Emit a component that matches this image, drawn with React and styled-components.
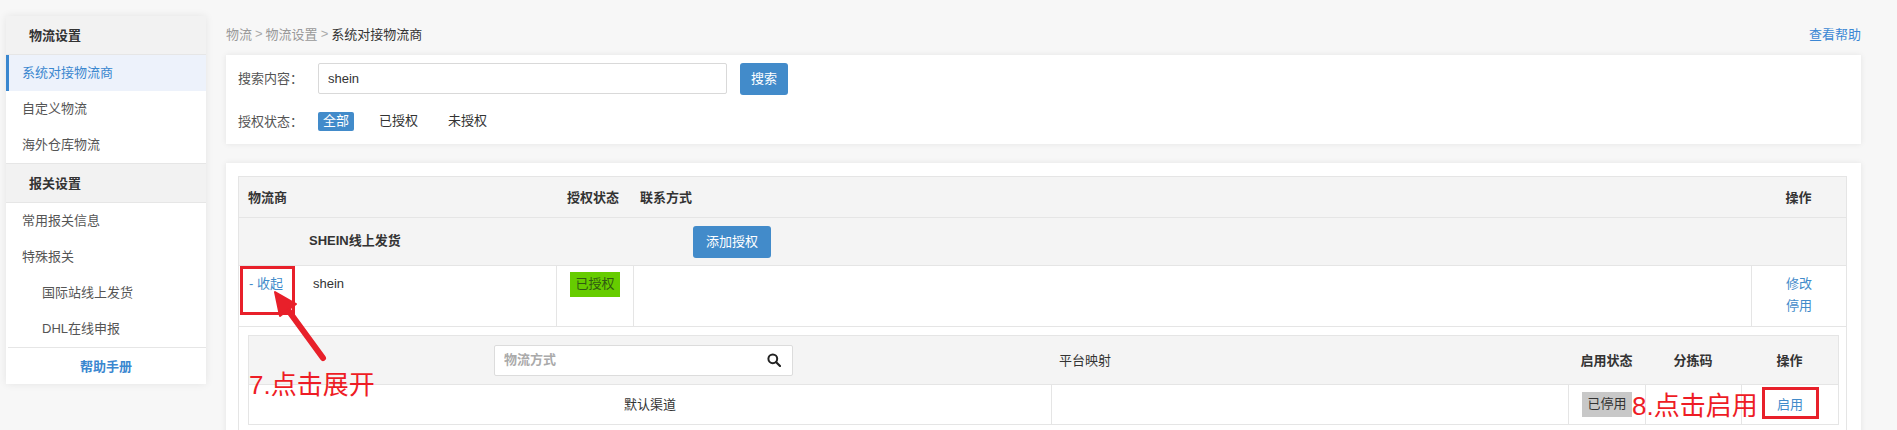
import React from 'react';
import styled, { createGlobalStyle } from 'styled-components';

const GlobalStyle = createGlobalStyle`
  html, body { margin: 0; padding: 0; overflow: hidden; background: #f7f7f7; }
  body {
    font-family: "Liberation Sans", "Noto Sans CJK SC", sans-serif;
    font-size: 13px;
    color: #333;
  }
  * { box-sizing: border-box; }
`;

const Page = styled.div`
  display: flex;
  align-items: flex-start;
  gap: 20px;
  width: 1897px;
  padding: 16px 36px 0 6px;
`;

/* ---------- Sidebar ---------- */
const Sidebar = styled.nav`
  flex: none;
  width: 200px;
  background: #fff;
  box-shadow: 0 0 8px rgba(0, 0, 0, 0.08);
`;

const SideHeader = styled.div`
  height: ${p => (p.$first ? 39 : 40)}px;
  display: flex;
  align-items: center;
  padding-left: 23px;
  padding-bottom: 1px;
  background: #f2f2f2;
  font-weight: bold;
  color: #333;
  border-bottom: 1px solid #e6e6e6;
  border-top: ${p => (p.$first ? 'none' : '1px solid #e6e6e6')};
`;

const SideItem = styled.div`
  height: 36px;
  display: flex;
  align-items: center;
  padding-bottom: 3px;
  padding-left: ${p => (p.$active ? 13 : p.$sub ? 36 : 16)}px;
  color: ${p => (p.$active ? '#3a87cf' : '#555')};
  background: ${p => (p.$active ? '#edf2fb' : '#fff')};
  border-left: ${p => (p.$active ? '3px solid #3a87cf' : 'none')};
`;

const SideDivider = styled.div`
  margin-left: 2px;
  border-top: 1px solid #e6e6e6;
`;

const SideHelp = styled.div`
  height: 36px;
  display: flex;
  align-items: center;
  justify-content: center;
  padding-bottom: 2px;
  color: #3a87d0;
  font-weight: bold;
`;

/* ---------- Main ---------- */
const Main = styled.main`
  flex: 1;
  min-width: 0;
`;

const TopBar = styled.div`
  height: 36px;
  margin-bottom: 3px;
  padding-bottom: 2px;
  display: flex;
  align-items: center;
  justify-content: space-between;
`;

const Crumbs = styled.div`
  color: #999;
  display: flex;
  align-items: center;
`;

const CrumbSep = styled.span`
  color: #aaa;
  margin: 0 3px;
`;

const CrumbCurrent = styled.span`
  color: #333;
`;

const HelpLink = styled.a`
  color: #3b87d4;
  text-decoration: none;
`;

const Card = styled.section`
  background: #fff;
  box-shadow: 0 0 6px rgba(0, 0, 0, 0.08);
`;

const SearchCard = styled(Card)`
  padding: 8px 12px 13px 12px;
`;

const FormRow = styled.div`
  display: flex;
  align-items: center;
  height: ${p => p.$h}px;
  margin-top: ${p => p.$mt || 0}px;
`;

const FormLabel = styled.span`
  width: 80px;
  color: #555;
  margin-bottom: 2px;
`;

const TextInput = styled.input`
  width: 409px;
  height: 31px;
  border: 1px solid #d9d9d9;
  border-radius: 2px;
  padding: 0 9px;
  font: inherit;
  color: #333;
  outline: none;
`;

const PrimaryButton = styled.button`
  height: 32px;
  padding: 0 ${p => p.$px || 10}px 2px;
  margin-left: ${p => p.$ml || 0}px;
  border: none;
  border-radius: 3px;
  background: #428bca;
  color: #fff;
  font: inherit;
`;

const FilterTag = styled.span`
  height: 19px;
  line-height: 18px;
  padding: 0 5px;
  margin-right: 20px;
  border-radius: 2px;
  background: ${p => (p.$active ? '#428bca' : 'transparent')};
  color: ${p => (p.$active ? '#fff' : '#333')};
`;

const ListCard = styled(Card)`
  margin-top: 19px;
  padding: 13px 14px 10px 12px;
`;

const TableWrap = styled.div`
  position: relative;
`;

const Table = styled.div`
  border: 1px solid #e5e5e5;
  border-bottom: none;
`;

const MainGrid = styled.div`
  display: grid;
  grid-template-columns: 317px 77px 1fr 95px;
  border-bottom: 1px solid #e5e5e5;
  height: ${p => p.$h}px;
  background: ${p => p.$bg || '#fff'};
  align-items: ${p => p.$align || 'stretch'};
`;

const HeadCell = styled.div`
  font-weight: bold;
  color: #333;
  padding-left: ${p => p.$pad || 0}px;
  padding-bottom: 2px;
  text-align: ${p => (p.$center ? 'center' : 'left')};
`;

const GroupName = styled.div`
  font-weight: bold;
  color: #333;
  padding-left: 70px;
  padding-bottom: 5px;
`;

const GroupAction = styled.div`
  padding-left: 60px;
`;

const Cell = styled.div`
  border-left: ${p => (p.$divider ? '1px solid #e5e5e5' : 'none')};
  padding-top: ${p => p.$pt ?? 7}px;
  padding-left: ${p => p.$pl || 0}px;
  line-height: 22px;
  display: flex;
  flex-direction: ${p => (p.$column ? 'column' : 'row')};
  align-items: ${p => (p.$center && p.$column ? 'center' : 'flex-start')};
  justify-content: ${p => (p.$center && !p.$column ? 'center' : 'flex-start')};
`;

const TextLink = styled.a`
  color: #428bca;
  text-decoration: none;
  width: ${p => (p.$w ? `${p.$w}px` : 'auto')};
`;

const StatusTag = styled.span`
  height: 25px;
  line-height: 24px;
  padding: 0 5px;
  background: ${p => p.$bg};
  color: ${p => p.$fg};
`;

const SubArea = styled.div`
  padding: 8px 7px 10px 9px;
  border-bottom: 1px solid #e5e5e5;
`;

const SubTable = styled.div`
  border: 1px solid #e5e5e5;
  border-bottom: none;
`;

const SubGrid = styled.div`
  display: grid;
  grid-template-columns: 802px 517px 77px 96px 1fr;
  height: ${p => p.$h}px;
  background: ${p => p.$bg || '#fff'};
  border-bottom: 1px solid #e5e5e5;
  align-items: stretch;
`;

const SubHead = styled.div`
  display: flex;
  align-items: center;
  justify-content: ${p => (p.$center ? 'center' : 'flex-start')};
  padding-left: ${p => p.$pl || 0}px;
  padding-bottom: ${p => (p.$box ? 0 : 2)}px;
  font-weight: ${p => (p.$bold ? 'bold' : 'normal')};
  color: #333;
`;

const SubCell = styled.div`
  display: flex;
  align-items: center;
  justify-content: center;
  padding-bottom: ${p => (p.$text ? 3 : 0)}px;
  border-left: ${p => (p.$divider ? '1px solid #e5e5e5' : 'none')};
  color: #333;
`;

const SearchBox = styled.div`
  width: 299px;
  height: 31px;
  display: flex;
  align-items: center;
  background: #fff;
  border: 1px solid #dcdcdc;
  border-radius: 2px;
  padding: 0 11px 0 9px;
`;

const BareInput = styled.input`
  flex: 1;
  min-width: 0;
  border: none;
  outline: none;
  font: inherit;
  color: #333;
  padding: 0 0 2px;
  &::placeholder {
    color: #aaa;
    font-weight: bold;
  }
`;

/* ---------- Annotations (overlays) ---------- */
const NoteBox = styled.div`
  position: absolute;
  left: ${p => p.$x}px;
  top: ${p => p.$y}px;
  width: ${p => p.$w}px;
  height: ${p => p.$h}px;
  border: 3px solid #e8202a;
  pointer-events: none;
`;

const NoteText = styled.div`
  position: absolute;
  left: ${p => p.$x}px;
  top: ${p => p.$y}px;
  font-size: 26px;
  line-height: 30px;
  color: #ee1c25;
  white-space: nowrap;
  pointer-events: none;
`;

const NoteArrow = styled.svg`
  position: absolute;
  left: 0;
  top: 0;
  overflow: visible;
  pointer-events: none;
`;

const SearchIcon = () => (
  <svg width="14" height="14" viewBox="0 0 14 14" fill="none">
    <circle cx="5.8" cy="5.8" r="4.4" stroke="#222" strokeWidth="2" />
    <line x1="9.2" y1="9.2" x2="13" y2="13" stroke="#222" strokeWidth="2.2" strokeLinecap="round" />
  </svg>
);

export default function App() {
  return (
    <>
      <GlobalStyle />
      <Page>
        <Sidebar>
          <SideHeader $first>物流设置</SideHeader>
          <SideItem $active>系统对接物流商</SideItem>
          <SideItem>自定义物流</SideItem>
          <SideItem>海外仓库物流</SideItem>
          <SideHeader>报关设置</SideHeader>
          <SideItem>常用报关信息</SideItem>
          <SideItem>特殊报关</SideItem>
          <SideItem $sub>国际站线上发货</SideItem>
          <SideItem $sub>DHL在线申报</SideItem>
          <SideDivider />
          <SideHelp>帮助手册</SideHelp>
        </Sidebar>

        <Main>
          <TopBar>
            <Crumbs>
              物流<CrumbSep>&gt;</CrumbSep>物流设置<CrumbSep>&gt;</CrumbSep>
              <CrumbCurrent>系统对接物流商</CrumbCurrent>
            </Crumbs>
            <HelpLink>查看帮助</HelpLink>
          </TopBar>

          <SearchCard>
            <FormRow $h={31}>
              <FormLabel>搜索内容：</FormLabel>
              <TextInput defaultValue="shein" />
              <PrimaryButton $ml={13} $px={11}>搜索</PrimaryButton>
            </FormRow>
            <FormRow $h={20} $mt={17}>
              <FormLabel>授权状态：</FormLabel>
              <FilterTag $active>全部</FilterTag>
              <FilterTag>已授权</FilterTag>
              <FilterTag>未授权</FilterTag>
            </FormRow>
          </SearchCard>

          <ListCard>
            <TableWrap>
              <Table>
                <MainGrid $h={41} $bg="#f4f4f4" $align="center">
                  <HeadCell $pad={9}>物流商</HeadCell>
                  <HeadCell $pad={11}>授权状态</HeadCell>
                  <HeadCell $pad={7}>联系方式</HeadCell>
                  <HeadCell $center>操作</HeadCell>
                </MainGrid>

                <MainGrid $h={48} $bg="#f4f4f4" $align="center">
                  <GroupName>SHEIN线上发货</GroupName>
                  <div />
                  <GroupAction>
                    <PrimaryButton $px={13}>添加授权</PrimaryButton>
                  </GroupAction>
                  <div />
                </MainGrid>

                <MainGrid $h={61}>
                  <Cell $pl={10}>
                    <TextLink $w={64}>- 收起</TextLink>
                    <span>shein</span>
                  </Cell>
                  <Cell $divider $center $pt={6}>
                    <StatusTag $bg="#66cc00" $fg="#2f5a12">已授权</StatusTag>
                  </Cell>
                  <Cell $divider />
                  <Cell $divider $center $column>
                    <TextLink>修改</TextLink>
                    <TextLink>停用</TextLink>
                  </Cell>
                </MainGrid>

                <SubArea>
                  <SubTable>
                    <SubGrid $h={49} $bg="#f4f4f4">
                      <SubHead $pl={245} $box>
                        <SearchBox>
                          <BareInput placeholder="物流方式" />
                          <SearchIcon />
                        </SearchBox>
                      </SubHead>
                      <SubHead $pl={8}>平台映射</SubHead>
                      <SubHead $center $bold>启用状态</SubHead>
                      <SubHead $center $bold>分拣码</SubHead>
                      <SubHead $center $bold>操作</SubHead>
                    </SubGrid>
                    <SubGrid $h={40}>
                      <SubCell $text>默认渠道</SubCell>
                      <SubCell $divider />
                      <SubCell $divider>
                        <StatusTag $bg="#c8c8c8" $fg="#333">已停用</StatusTag>
                      </SubCell>
                      <SubCell $divider />
                      <SubCell $divider $text>
                        <TextLink>启用</TextLink>
                      </SubCell>
                    </SubGrid>
                  </SubTable>
                </SubArea>
              </Table>

              <NoteBox $x={2} $y={90} $w={55} $h={49} />
              <NoteArrow width="120" height="200" viewBox="0 0 120 200">
                <line x1="85" y1="182" x2="50" y2="134" stroke="#e8202a" strokeWidth="6" strokeLinecap="round" />
                <polygon points="37,116 58,128 42,140" fill="#e8202a" stroke="#e8202a" strokeWidth="2" strokeLinejoin="round" />
              </NoteArrow>
              <NoteText $x={11} $y={194}>7.点击展开</NoteText>

              <NoteText $x={1394} $y={215}>8.点击启用</NoteText>
              <NoteBox $x={1524} $y={211} $w={57} $h={32} />
            </TableWrap>
          </ListCard>
        </Main>
      </Page>
    </>
  );
}
